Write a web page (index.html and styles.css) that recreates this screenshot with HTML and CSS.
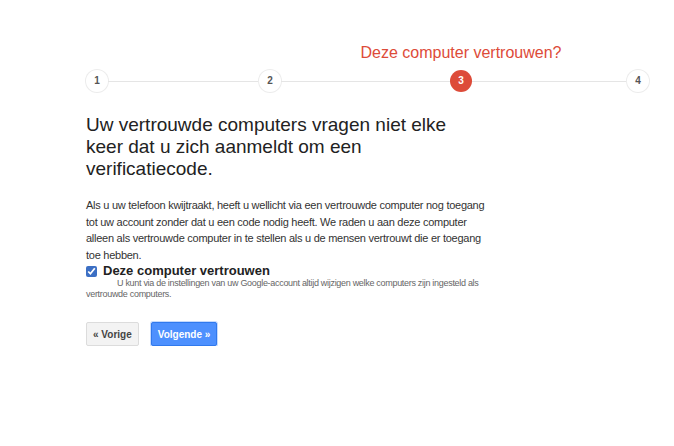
FILE: index.html
```
<!DOCTYPE html>
<html>
<head>
    <meta charset="UTF-8" />
    <title>Deze computer vertrouwen?</title>
    <link rel="stylesheet" href="styles.css">
</head>
<body>

<div class="page">
  <div class="step-title">Deze computer vertrouwen?</div>

  <div class="steps">
    <div class="step">1</div>
    <div class="step-line line-a"></div>
    <div class="step">2</div>
    <div class="step-line line-b"></div>
    <div class="step current">3</div>
    <div class="step-line line-c"></div>
    <div class="step">4</div>
  </div>

  <div class="content">
    <h1>Uw vertrouwde computers vragen niet elke keer dat u zich aanmeldt om een verificatiecode.</h1>

    <p class="intro">Als u uw telefoon kwijtraakt, heeft u wellicht via een vertrouwde computer nog toegang tot uw account zonder dat u een code nodig heeft. We raden u aan deze computer alleen als vertrouwde computer in te stellen als u de mensen vertrouwt die er toegang toe hebben.</p>

    <div class="trust">
      <label class="trust-label"><input type="checkbox" checked> Deze computer vertrouwen</label>
      <div class="trust-note">U kunt via de instellingen van uw Google-account altijd wijzigen welke computers zijn ingesteld als vertrouwde computers.</div>
    </div>

    <div class="buttons">
      <input type="button" class="button" value="&laquo; Vorige"/>
      <input type="button" class="button primary" value="Volgende &raquo;"/>
    </div>
  </div>
</div>

</body>
</html>
```

FILE: styles.css
```
* {
  box-sizing: border-box;
}

body {
  margin: 0;
  background: #fff;
  font-family: "Liberation Sans", Arial, sans-serif;
  color: #222;
}

.page {
  padding: 42px 0 0 86px;
}

/* Step indicator */
.step-title {
  width: 250px;
  margin-left: 250px;
  text-align: center;
  color: #dd4b39;
  font-size: 16px;
  line-height: 22px;
}

.steps {
  display: flex;
  align-items: center;
  margin-top: 6px;
}

.step {
  width: 22px;
  height: 22px;
  border-radius: 50%;
  background: #fff;
  box-shadow: 0 0 0 1px #ececec;
  color: #555;
  font-size: 10px;
  font-weight: bold;
  line-height: 22px;
  text-align: center;
  flex: none;
}

.step.current {
  background: #dd4b39;
  box-shadow: none;
  color: #fff;
}

.step-line {
  height: 1px;
  background: #e5e5e5;
}

.line-a { width: 151px; }
.line-b { width: 169px; }
.line-c { width: 155px; }

/* Main content */
.content {
  width: 405px;
}

h1 {
  width: 400px;
  margin: 22px 0 0;
  font-size: 19px;
  line-height: 22px;
  font-weight: normal;
  color: #222;
}

.intro {
  margin: 17px 0 0;
  font-size: 11px;
  letter-spacing: -0.26px;
  line-height: 16.5px;
  color: #333;
}

.trust {
  margin-top: 1px;
}

.trust-label {
  display: flex;
  align-items: center;
  font-size: 13px;
  font-weight: bold;
  line-height: 14px;
  color: #222;
}

.trust-label input {
  width: 11px;
  height: 11px;
  margin: 0 6px 0 0;
  accent-color: #3c6fc4;
}

.trust-note {
  font-size: 9px;
  letter-spacing: -0.3px;
  line-height: 11px;
  color: #666;
  text-indent: 31px;
  margin-top: 0;
}

.buttons {
  display: flex;
  gap: 12px;
  margin-top: 22px;
}

.button {
  height: 24px;
  padding: 0 6px;
  border: 1px solid #dcdcdc;
  border-radius: 2px;
  background: #f3f3f3;
  color: #444;
  font-family: "Liberation Sans", Arial, sans-serif;
  font-size: 10px;
  font-weight: bold;
}

.button.primary {
  border-color: #3079ed;
  background: #4d90fe;
  color: #fff;
  box-shadow: 0 0 0 1px #c6dafc;
}
```
